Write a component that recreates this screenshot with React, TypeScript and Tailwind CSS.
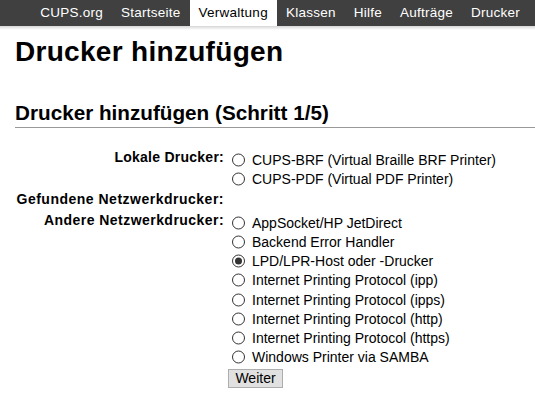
import React from "react";

const navItems = ["CUPS.org", "Startseite", "Verwaltung", "Klassen", "Hilfe", "Aufträge", "Drucker"];

const localPrinters = ["CUPS-BRF (Virtual Braille BRF Printer)", "CUPS-PDF (Virtual PDF Printer)"];

const otherPrinters = [
  "AppSocket/HP JetDirect",
  "Backend Error Handler",
  "LPD/LPR-Host oder -Drucker",
  "Internet Printing Protocol (ipp)",
  "Internet Printing Protocol (ipps)",
  "Internet Printing Protocol (http)",
  "Internet Printing Protocol (https)",
  "Windows Printer via SAMBA",
];

function Radio({ label, checked }: { label: string; checked?: boolean }) {
  return (
    <label className="h-[19.25px] flex items-center whitespace-nowrap">
      <span className="ml-[4px] mr-[7px] w-[13px] h-[13px] rounded-full border border-[#333] bg-white flex items-center justify-center -translate-y-[0.5px]">
        {checked && <span className="w-[7px] h-[7px] rounded-full bg-[#333]" />}
      </span>
      {label}
    </label>
  );
}

export default function App() {
  return (
    <div className="min-h-[409px] bg-white text-black text-[14px] font-['Liberation_Sans',Arial,sans-serif]">
      <nav className="h-[26px] bg-[#404040] flex justify-end pr-[6px] text-[13.5px] tracking-[0.25px]">
        {navItems.map((item) =>
          item === "Verwaltung" ? (
            <span key={item} className="px-[9px] flex items-center bg-white text-black">
              {item}
            </span>
          ) : (
            <span key={item} className="px-[9px] flex items-center text-white">
              {item}
            </span>
          )
        )}
      </nav>
      <div className="h-[4px] bg-gradient-to-b from-[#d6d6d6] to-white" />

      <main className="pl-[15px]">
        <h1 className="mt-[6.4px] text-[28px] leading-[32px] font-bold tracking-[0.3px]">Drucker hinzufügen</h1>
        <h2 className="mt-[33px] text-[20.7px] leading-[24px] font-bold pb-[1.7px] border-b border-[#999]">
          Drucker hinzufügen (Schritt 1/5)
        </h2>

        <div className="mt-[21px] flex">
          <div className="w-[213px] pr-[4px] text-right font-bold leading-[16px] tracking-[0.25px]">Lokale Drucker:</div>
          <div className="pt-[1.7px]">
            {localPrinters.map((p) => (
              <Radio key={p} label={p} />
            ))}
          </div>
        </div>

        <div className="mt-[2.1px] flex">
          <div className="w-[213px] pr-[4px] text-right font-bold leading-[16px] whitespace-nowrap tracking-[0.5px]">
            Gefundene Netzwerkdrucker:
          </div>
        </div>

        <div className="mt-[4.7px] flex">
          <div className="w-[213px] pr-[4px] text-right font-bold leading-[16px] whitespace-nowrap tracking-[0.45px]">
            Andere Netzwerkdrucker:
          </div>
          <div className="pt-[1.4px]">
            {otherPrinters.map((p) => (
              <Radio key={p} label={p} checked={p.startsWith("LPD")} />
            ))}
          </div>
        </div>

        <div className="mt-[1.6px] flex">
          <div className="w-[213px]" />
          <button className="w-[55px] h-[19px] bg-[#e1e1e1] border border-[#adadad] text-[14px] leading-[17px] text-black">
            Weiter
          </button>
        </div>
      </main>
    </div>
  );
}
